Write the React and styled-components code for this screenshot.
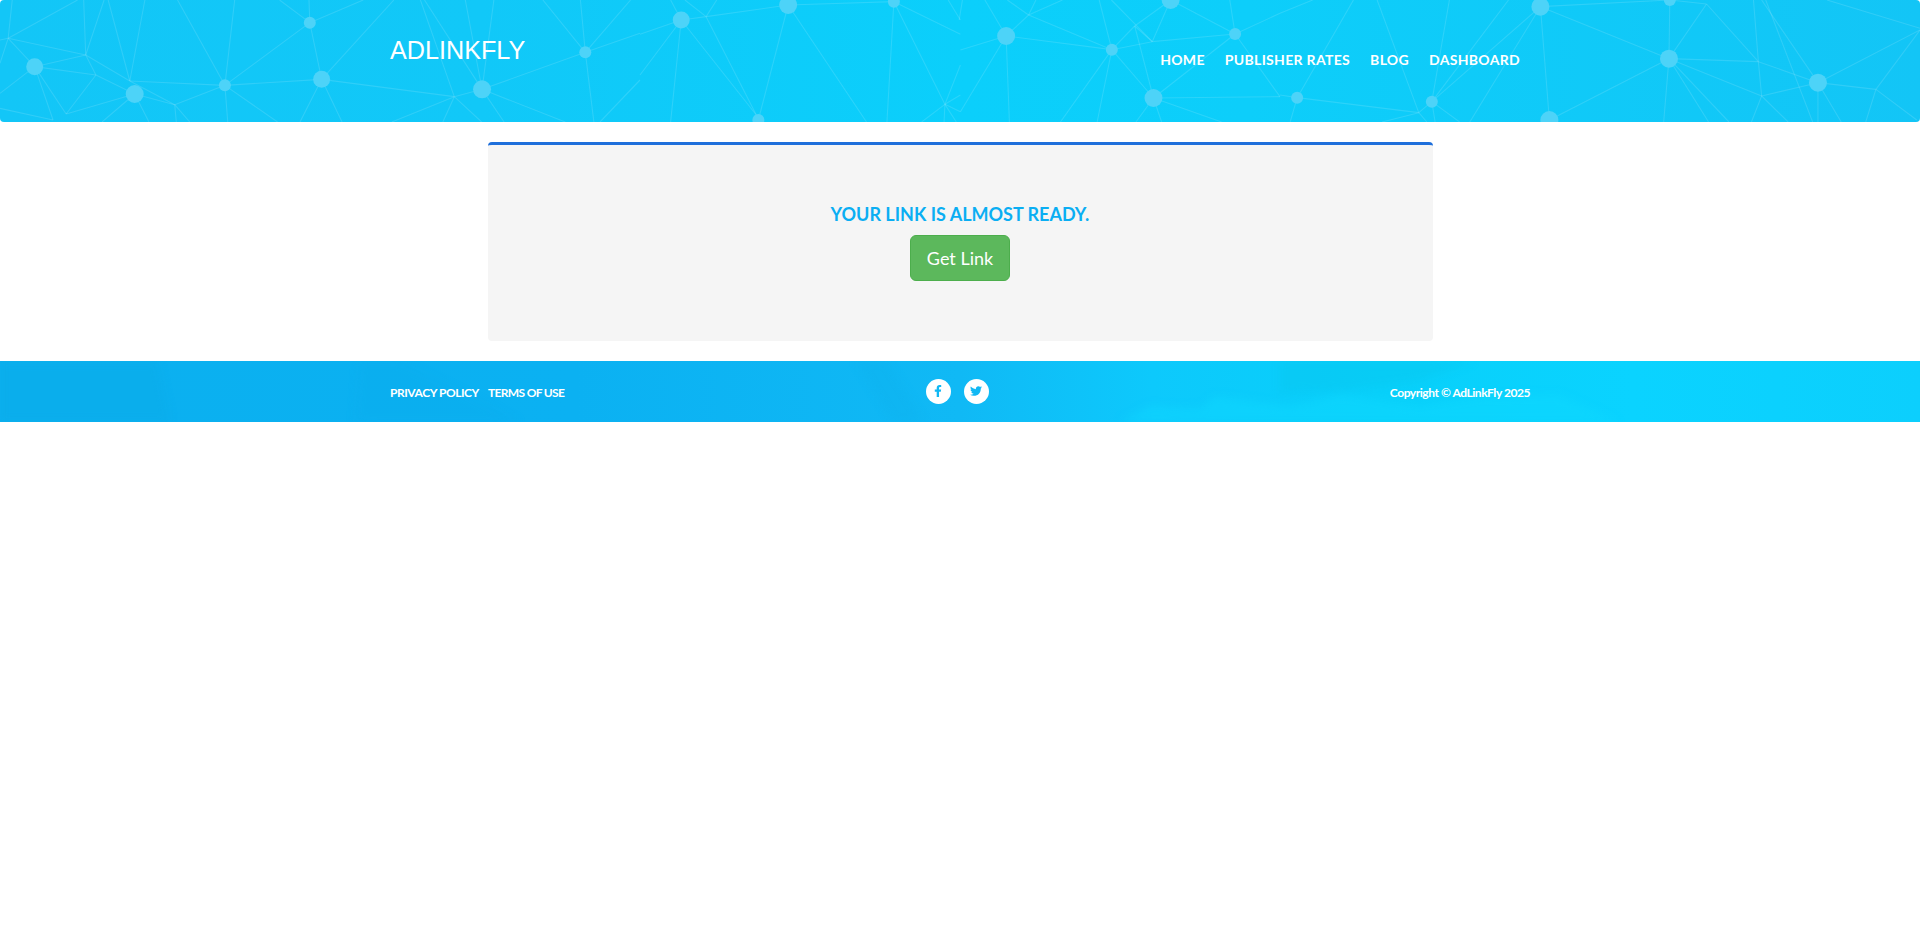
import React from "react"
import styled, { createGlobalStyle } from "styled-components"
import { FaFacebookF, FaTwitter } from "react-icons/fa"

const GlobalStyle = createGlobalStyle`
  html, body {
    margin: 0;
    padding: 0;
    background: #fff;
    font-family: "Lato", "Open Sans", sans-serif;
  }
  * {
    box-sizing: border-box;
  }
`

const SX = 2.45
const SY = 3

// network drawing, measured in three panels of the header
const panels = [
  {
    dx: 0,
    nodes: [
      [85, 200, 8.5], [330, 282, 9], [551, 256, 6], [759, 68, 6], [788, 238, 8.5], [1181, 268, 9], [1434, 157, 6],
    ],
    lines: [
      [0, 120, 20, 115], [20, 115, 190, 0], [20, 115, 30, 0], [20, 115, 210, 165], [20, 115, 85, 200], [0, 190, 20, 115],
      [0, 280, 85, 200], [85, 200, 210, 165], [85, 200, 235, 225], [85, 200, 130, 360], [85, 200, 162, 342],
      [210, 165, 205, 0], [210, 165, 255, 0], [210, 165, 318, 243], [210, 165, 235, 225], [235, 225, 162, 342],
      [235, 225, 330, 282], [265, 0, 318, 243], [355, 0, 318, 243], [318, 243, 551, 256], [318, 243, 428, 314],
      [330, 282, 162, 342], [330, 282, 250, 366], [330, 282, 365, 366], [330, 282, 428, 314], [428, 314, 551, 256],
      [428, 314, 465, 366], [428, 314, 432, 366], [551, 256, 435, 0], [551, 256, 575, 0], [551, 256, 759, 68],
      [551, 256, 788, 238], [551, 256, 680, 366], [551, 256, 558, 366], [759, 68, 685, 0], [759, 68, 757, 0],
      [759, 68, 890, 0], [759, 68, 788, 238], [788, 238, 965, 0], [788, 238, 735, 366], [788, 238, 838, 366],
      [788, 238, 1113, 290], [1113, 290, 1181, 268], [1113, 290, 960, 366], [1113, 290, 1030, 0], [1113, 290, 1085, 366],
      [1113, 290, 1180, 366], [1181, 268, 1040, 0], [1181, 268, 1140, 0], [1181, 268, 1210, 0], [1181, 268, 1434, 157],
      [1181, 268, 1385, 366], [1181, 268, 1235, 366], [1434, 157, 1330, 0], [1434, 157, 1422, 0], [1434, 157, 1545, 0],
      [1434, 157, 1568, 100], [1434, 157, 1455, 366], [1568, 240, 1470, 366], [0, 325, 130, 360],
    ],
  },
  {
    dx: 640,
    nodes: [
      [101, 60, 8.5], [363, 15, 9], [622, 5, 6], [290, 360, 6], [897, 108, 9], [1156, 149, 6], [1458, 102, 6], [1258, 294, 9], [1300, 0, 9],
    ],
    lines: [
      [0, 103, 101, 60], [0, 225, 101, 60], [101, 60, 162, 50], [101, 60, 75, 366], [101, 60, 285, 345], [75, 0, 101, 60],
      [162, 50, 110, 0], [162, 50, 188, 0], [162, 50, 363, 15], [162, 50, 285, 345], [363, 15, 290, 360], [363, 15, 555, 366],
      [363, 15, 622, 5], [622, 5, 605, 366], [622, 5, 747, 313], [622, 5, 785, 103], [755, 0, 785, 60], [790, 0, 782, 60],
      [747, 313, 690, 366], [747, 313, 785, 195], [747, 313, 785, 285], [747, 313, 745, 366], [747, 313, 785, 335], [747, 313, 775, 366],
      [785, 150, 897, 108], [785, 335, 897, 108], [897, 108, 845, 0], [897, 108, 952, 45], [897, 108, 905, 366], [897, 108, 1156, 149],
      [952, 45, 900, 0], [952, 45, 970, 0], [952, 45, 1035, 0], [952, 45, 1156, 149], [1156, 149, 1125, 0], [1156, 149, 1212, 78],
      [1156, 149, 1255, 125], [1156, 149, 1030, 366], [1156, 149, 1120, 366], [1156, 149, 1258, 294], [1212, 78, 1300, 0],
      [1212, 78, 1255, 125], [1212, 78, 1258, 294], [1155, 0, 1255, 125], [1255, 125, 1300, 0], [1255, 125, 1458, 102],
      [1458, 102, 1300, 0], [1458, 102, 1445, 0], [1458, 102, 1568, 40], [1458, 102, 1258, 294], [1458, 102, 1568, 290],
      [1258, 294, 1568, 290], [1258, 294, 1215, 366], [1258, 294, 1278, 366], [1258, 294, 1425, 366],
    ],
  },
  {
    dx: 1280,
    nodes: [
      [42, 293, 6], [372, 305, 6], [638, 20, 9], [955, 0, 6], [953, 176, 9], [1318, 248, 9], [660, 360, 9],
    ],
    lines: [
      [0, 40, 80, 0], [180, 0, 42, 293], [0, 285, 42, 293], [42, 293, 340, 338], [42, 293, 25, 366], [238, 0, 340, 338],
      [415, 0, 372, 305], [560, 0, 372, 305], [638, 20, 372, 305], [638, 20, 465, 366], [340, 338, 372, 305], [340, 338, 250, 366],
      [340, 338, 360, 366], [372, 305, 440, 366], [372, 305, 380, 366], [638, 20, 955, 0], [638, 20, 953, 176], [638, 20, 660, 360],
      [660, 360, 953, 176], [953, 176, 955, 0], [953, 176, 1045, 12], [953, 176, 1172, 185], [953, 176, 1180, 288], [953, 176, 940, 366],
      [953, 176, 1050, 366], [953, 176, 1100, 366], [1045, 12, 1172, 185], [1045, 12, 955, 0], [1172, 185, 1160, 0], [1172, 185, 1180, 288],
      [1172, 185, 1318, 248], [1180, 0, 1318, 248], [1190, 0, 1305, 366], [1180, 288, 1318, 248], [1180, 288, 1155, 366], [1180, 288, 1245, 366],
      [1318, 248, 1460, 268], [1318, 248, 1568, 90], [1318, 248, 1318, 366], [1318, 248, 1375, 366], [1460, 268, 1568, 90], [1460, 268, 1435, 366],
      [1460, 268, 1560, 360], [1340, 0, 1568, 85],
    ],
  },
]

const Header = styled.header`
  position: relative;
  height: 122px;
  border-radius: 4px;
  overflow: hidden;
  background: linear-gradient(90deg, #13c6f7 0%, #11c8f8 25%, #0bcffb 50%, #0dcefa 65%, #13c5f6 100%);
`

const Network = styled.svg`
  position: absolute;
  inset: 0;
  width: 100%;
  height: 100%;
`

const FooterTexture = styled(Network)`
  filter: blur(4px);
`

const Container = styled.div`
  position: relative;
  width: 1170px;
  margin: 0 auto;
  padding: 0 15px;
`

const HeaderRow = styled(Container)`
  display: flex;
  justify-content: space-between;
  padding-top: 34px;
`

const Logo = styled.a`
  font-family: "Liberation Sans", Arial, sans-serif;
  font-size: 25.2px;
  line-height: 32px;
  color: #fff;
`

const Nav = styled.nav`
  display: flex;
  gap: 20px;
  padding-right: 10px;
  padding-top: 16px;
`

const NavLink = styled.a`
  font-size: 14px;
  line-height: 20px;
  font-weight: 700;
  letter-spacing: 0.32px;
  color: #fff;
  text-transform: uppercase;
`

const Main = styled.main`
  width: 945px;
  height: 199px;
  margin: 20px auto 0;
  padding-top: 58px;
  background: #f5f5f5;
  border-top: 3px solid #1e6fdb;
  border-radius: 4px;
  text-align: center;
`

const Title = styled.h3`
  margin: 0 0 10px;
  font-size: 18px;
  line-height: 22px;
  font-weight: 700;
  color: #0aaef3;
  text-transform: uppercase;
`

const GetLink = styled.button`
  height: 46px;
  padding: 10px 16px;
  font-family: inherit;
  font-size: 18px;
  line-height: 24px;
  color: #fff;
  background: #5cb85c;
  border: 1px solid #4cae4c;
  border-radius: 6px;
`

const Footer = styled.footer`
  position: relative;
  height: 61px;
  margin-top: 20px;
  overflow: hidden;
  background: linear-gradient(90deg, #0bb0ef 0%, #0bb1f2 30%, #10b9f5 50%, #0dc9fc 60%, #08d0fa 72%, #0ad3ff 85%, #0ccffd 100%);
`

const FooterRow = styled(Container)`
  display: grid;
  grid-template-columns: 1fr 1fr 1fr;
  align-items: center;
  height: 61px;
  padding-top: 2px;
`

const FooterLinks = styled.div`
  display: flex;
  gap: 9px;
`

const SmallLink = styled.a`
  font-size: 12px;
  line-height: 16px;
  font-weight: 700;
  letter-spacing: ${(p) => (p.$tight ? "-0.65px" : "-0.45px")};
  color: #fff;
  text-transform: ${(p) => (p.$upper ? "uppercase" : "none")};
`

const Socials = styled.div`
  display: flex;
  justify-content: center;
  gap: 13px;
  margin: -3px 6px 0 0;
`

const Social = styled.a`
  display: flex;
  align-items: center;
  justify-content: center;
  width: 25px;
  height: 25px;
  border-radius: 50%;
  background: #fff;
  color: #10b8f4;
  font-size: 12px;
`

const Copy = styled(SmallLink)`
  justify-self: end;
`

const NetworkArt = () => (
  <Network viewBox="0 0 1920 122" preserveAspectRatio="none" aria-hidden="true">
    {panels.map((p) => (
      <g key={p.dx}>
        {p.lines.map(([a, b, c, d], i) => (
          <line
            key={i}
            x1={p.dx + a / SX}
            y1={b / SY}
            x2={p.dx + c / SX}
            y2={d / SY}
            stroke="#fff"
            strokeOpacity="0.13"
            strokeWidth="1.1"
          />
        ))}
      </g>
    ))}
    {panels.map((p) => (
      <g key={p.dx}>
        {p.nodes.map(([x, y, r], i) => (
          <circle key={i} cx={p.dx + x / SX} cy={y / SY} r={r} fill="#4dd3f8" />
        ))}
      </g>
    ))}
  </Network>
)

const FooterArt = () => (
  <FooterTexture viewBox="0 0 1920 61" preserveAspectRatio="none" aria-hidden="true">
    <polygon points="-10,-10 155,-10 172,71 -10,71" fill="#0aa9e4" fillOpacity="0.3" />
    <polygon points="355,60 360,-10 380,-10 540,71" fill="#0aa8ea" fillOpacity="0.2" />
    <polygon points="850,-10 880,-10 930,71 900,71" fill="#0aaeea" fillOpacity="0.25" />
    <polygon points="1100,71 1150,45 1200,48 1215,35 1290,45 1340,33 1420,45 1480,35 1560,34 1640,71" fill="#0fd9ff" fillOpacity="0.45" />
    <polygon points="1280,-10 1500,-10 1420,20 1340,30 1280,32" fill="#08c6ee" fillOpacity="0.4" />
  </FooterTexture>
)

export default function App() {
  return (
    <>
      <GlobalStyle />
      <Header>
        <NetworkArt />
        <HeaderRow>
          <Logo>ADLINKFLY</Logo>
          <Nav>
            <NavLink>Home</NavLink>
            <NavLink>Publisher Rates</NavLink>
            <NavLink>Blog</NavLink>
            <NavLink>Dashboard</NavLink>
          </Nav>
        </HeaderRow>
      </Header>
      <Main>
        <Title>Your link is almost ready.</Title>
        <GetLink>Get Link</GetLink>
      </Main>
      <Footer>
        <FooterArt />
        <FooterRow>
          <FooterLinks>
            <SmallLink $upper>Privacy Policy</SmallLink>
            <SmallLink $upper $tight>Terms of Use</SmallLink>
          </FooterLinks>
          <Socials>
            <Social><FaFacebookF /></Social>
            <Social><FaTwitter /></Social>
          </Socials>
          <Copy>Copyright © AdLinkFly 2025</Copy>
        </FooterRow>
      </Footer>
    </>
  )
}
